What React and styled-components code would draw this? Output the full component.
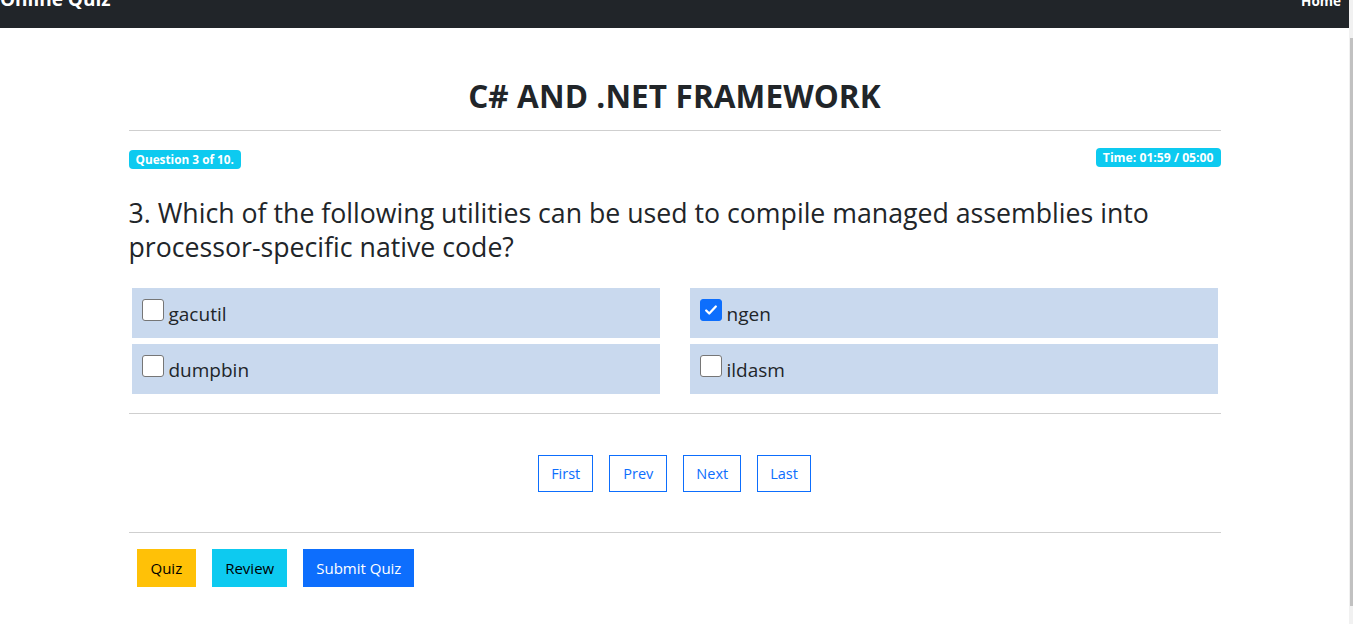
import React, { useState } from 'react'
import styled, { createGlobalStyle } from 'styled-components'

const GlobalStyle = createGlobalStyle`
  html, body {
    margin: 0;
    padding: 0;
    background: #fff;
    overflow: hidden;
  }
  body {
    font-family: "Open Sans", "Noto Sans", "Liberation Sans", sans-serif;
    color: #212529;
  }
  * {
    box-sizing: border-box;
  }
`

const Page = styled.div`
  width: calc(100% - 4px);
`

const NavBar = styled.nav`
  height: 28px;
  background: #212529;
  display: flex;
  justify-content: space-between;
  align-items: flex-start;
  overflow: hidden;
  padding-right: 8px;
`

const Brand = styled.div`
  color: #fff;
  font-weight: 700;
  font-size: 19px;
  line-height: 20px;
  margin-top: -11px;
`

const NavLink = styled.div`
  color: #fff;
  font-weight: 700;
  font-size: 13.5px;
  line-height: 14px;
  margin-top: -6px;
`

const Container = styled.main`
  width: 1092px;
  margin: 0 auto;
`

const Title = styled.h2`
  margin: 0;
  padding-top: 48px;
  text-align: center;
  font-size: 31.5px;
  font-weight: 700;
  line-height: 40px;
  letter-spacing: 0.1px;
`

const Rule = styled.hr`
  margin: ${p => p.gap || '14px 0 0'};
  border: 0;
  border-top: 1px solid #cfcfcf;
`

const BadgeRow = styled.div`
  display: flex;
  justify-content: space-between;
  align-items: flex-start;
  margin-top: 17px;
`

const Badge = styled.span`
  display: inline-block;
  background: #0dcaf0;
  color: #fff;
  font-size: ${p => p.size || 11.8}px;
  font-weight: 700;
  line-height: 19px;
  height: 19px;
  padding: 0 7px;
  border-radius: 4px;
  margin-top: ${p => p.offset || 0}px;
`

const Question = styled.h3`
  margin: 27px 0 0;
  font-size: 26.7px;
  font-weight: 400;
  line-height: 33.5px;
`

const Options = styled.div`
  display: grid;
  grid-template-columns: 1fr 1fr;
  column-gap: 30px;
  row-gap: 6px;
  margin: 25px 3px 0;
`

const Option = styled.label`
  display: flex;
  align-items: flex-start;
  height: 50px;
  background: #c9d9ee;
  padding: 11px 0 0 10px;
  font-size: 19px;
  line-height: 30px;
  cursor: pointer;
`

const Box = styled.span`
  width: 22px;
  height: 22px;
  margin-right: 5px;
  border-radius: 3px;
  border: 1px solid ${p => (p.checked ? '#0d6efd' : '#767676')};
  background: ${p => (p.checked ? '#0d6efd' : '#fff')};
  display: flex;
  align-items: center;
  justify-content: center;
  flex: none;
`

const Pager = styled.div`
  display: flex;
  justify-content: center;
  gap: 16px;
  margin-top: 41px;
`

const PageButton = styled.button`
  height: 37px;
  padding: 0 ${p => p.pad}px;
  background: #fff;
  border: 1px solid #0d6efd;
  color: #0d6efd;
  font-family: inherit;
  font-size: 14.5px;
  border-radius: 0;
`

const Actions = styled.div`
  display: flex;
  gap: 16px;
  margin: 16px 0 0 8px;
`

const ActionButton = styled.button`
  height: 38px;
  padding: 0 ${p => p.pad || 13}px;
  border: 0;
  border-radius: 0;
  background: ${p => p.bg};
  color: ${p => p.fg};
  font-family: inherit;
  font-size: 15px;
`

const Scrollbar = styled.div`
  position: fixed;
  top: 0;
  right: 0;
  width: 4px;
  height: 100%;
  background: #f1f1f1;
  &::after {
    content: '';
    position: absolute;
    left: 1px;
    right: 0;
    top: 38px;
    height: 568px;
    background: #c1c1c1;
  }
`

const Check = () => (
  <svg width="14" height="14" viewBox="0 0 16 16">
    <path d="M2.5 8.5l3.5 3.5 7.5-8" fill="none" stroke="#fff" strokeWidth="2.6" strokeLinecap="round" strokeLinejoin="round" />
  </svg>
)

const answers = ['gacutil', 'ngen', 'dumpbin', 'ildasm']

export default function App() {
  const [picked, setPicked] = useState({ ngen: true })

  return (
    <Page>
      <GlobalStyle />
      <NavBar>
        <Brand>Online Quiz</Brand>
        <NavLink>Home</NavLink>
      </NavBar>
      <Container>
        <Title>C# AND .NET FRAMEWORK</Title>
        <Rule />
        <BadgeRow>
          <Badge offset={2}>Question 3 of 10.</Badge>
          <Badge size={12.2}>Time: 01:59 / 05:00</Badge>
        </BadgeRow>
        <Question>
          3. Which of the following utilities can be used to compile managed assemblies into processor-specific native code?
        </Question>
        <Options>
          {answers.map(a => (
            <Option key={a} onClick={() => setPicked({ ...picked, [a]: !picked[a] })}>
              <Box checked={picked[a]}>{picked[a] && <Check />}</Box>
              {a}
            </Option>
          ))}
        </Options>
        <Rule gap="19px 0 0" />
        <Pager>
          <PageButton pad={12}>First</PageButton>
          <PageButton pad={13}>Prev</PageButton>
          <PageButton pad={12}>Next</PageButton>
          <PageButton pad={12}>Last</PageButton>
        </Pager>
        <Rule gap="40px 0 0" />
        <Actions>
          <ActionButton bg="#ffc107" fg="#000" pad={14}>Quiz</ActionButton>
          <ActionButton bg="#0dcaf0" fg="#000">Review</ActionButton>
          <ActionButton bg="#0d6efd" fg="#fff">Submit Quiz</ActionButton>
        </Actions>
      </Container>
      <Scrollbar />
    </Page>
  )
}
